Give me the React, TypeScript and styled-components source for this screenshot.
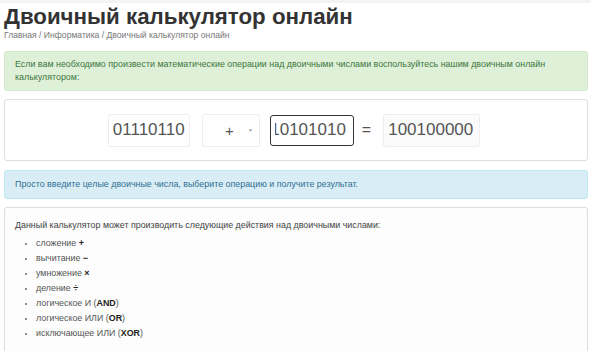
import React from "react";
import styled, { createGlobalStyle } from "styled-components";

const Global = createGlobalStyle`
  html, body { margin: 0; padding: 0; background: #fff; }
  body { font-family: "Liberation Sans", Arial, sans-serif; color: #333; }
`;

const Page = styled.div`
  padding: 0 3px 0 4px;
  border-top: 3px solid #f3f3f3;
`;

const Title = styled.h1`
  margin: 0;
  font-size: 22.3px;
  line-height: 27px;
  font-weight: bold;
  color: #333;
`;

const Crumbs = styled.div`
  font-size: 8.6px;
  line-height: 11px;
  color: #777;
  margin-bottom: 10px;
`;

const Alert = styled.div<{ $tone: "success" | "info" }>`
  border: 1px solid ${(p) => (p.$tone === "success" ? "#d6e9c6" : "#bce8f1")};
  background: ${(p) => (p.$tone === "success" ? "#dff0d8" : "#d9edf7")};
  color: ${(p) => (p.$tone === "success" ? "#3c763d" : "#31708f")};
  border-radius: 3px;
  font-size: 8.9px;
  line-height: 13px;
  padding: ${(p) => (p.$tone === "success" ? "6px 10px" : "7px 10px")};
  margin-bottom: 8px;
`;

const CalcPanel = styled.div`
  border: 1px solid #ddd;
  border-radius: 3px;
  background: #fff;
  height: 60px;
  display: flex;
  align-items: center;
  justify-content: center;
  margin-bottom: 9px;
  padding-right: 4px;
`;

const Field = styled.div<{ $focus?: boolean; $readonly?: boolean; $w: number }>`
  width: ${(p) => p.$w}px;
  height: ${(p) => (p.$focus ? 31 : 33)}px;
  box-sizing: border-box;
  border: ${(p) => (p.$focus ? "1.5px solid #333" : "1px solid #eee")};
  border-radius: ${(p) => (p.$focus ? 3 : 2)}px;
  background: ${(p) => (p.$readonly ? "#fbfbfb" : "#fff")};
  color: #555;
  font-size: 17px;
  display: flex;
  align-items: center;
  padding: 0 4px;
  white-space: nowrap;
`;

const Scroller = styled.span`
  display: block;
  overflow: hidden;
  flex: 1;
`;

const Shifted = styled.span`
  display: inline-block;
  margin-left: -4.6px;
`;

const Select = styled.div`
  width: 58px;
  height: 33px;
  box-sizing: border-box;
  border: 1px solid #eee;
  border-radius: 2px;
  display: flex;
  align-items: center;
  justify-content: flex-end;
  gap: 14px;
  padding-right: 6px;
  color: #555;
  font-size: 15px;
  margin: 0 10px 0 12px;
`;

const Caret = styled.span`
  font-size: 5px;
  color: #999;
`;

const Eq = styled.span`
  font-size: 16px;
  color: #555;
  margin: 0 12px 0 8px;
`;

const InfoPanel = styled.div`
  border: 1px solid #ddd;
  border-radius: 3px;
  background: #fcfdfc;
  padding: 11px 10px 20px;
  font-size: 8.9px;
  line-height: 13px;
  color: #444;
  min-height: 120px;
`;

const Intro = styled.p`
  margin: 0 0 4px;
`;

const List = styled.ul`
  margin: 0;
  padding-left: 21px;
  li {
    line-height: 15px;
    color: #555;
  }
  li::marker { font-size: 8px; color: #666; }
  b { color: #222; }
`;

export default function App() {
  return (
    <>
      <Global />
      <Page>
        <Title>Двоичный калькулятор онлайн</Title>
        <Crumbs>Главная / Информатика / Двоичный калькулятор онлайн</Crumbs>
        <Alert $tone="success">
          Если вам необходимо произвести математические операции над двоичными числами воспользуйтесь нашим двоичным онлайн калькулятором:
        </Alert>
        <CalcPanel>
          <Field $w={82}>01110110</Field>
          <Select>
            <span>+</span>
            <Caret>▼</Caret>
          </Select>
          <Field $w={84} $focus>
            <Scroller>
              <Shifted>10101010</Shifted>
            </Scroller>
          </Field>
          <Eq>=</Eq>
          <Field $w={97} $readonly>100100000</Field>
        </CalcPanel>
        <Alert $tone="info">
          Просто введите целые двоичные числа, выберите операцию и получите результат.
        </Alert>
        <InfoPanel>
          <Intro>Данный калькулятор может производить следующие действия над двоичными числами:</Intro>
          <List>
            <li>сложение <b>+</b></li>
            <li>вычитание <b>−</b></li>
            <li>умножение <b>×</b></li>
            <li>деление <b>÷</b></li>
            <li>логическое И (<b>AND</b>)</li>
            <li>логическое ИЛИ (<b>OR</b>)</li>
            <li>исключающее ИЛИ (<b>XOR</b>)</li>
          </List>
        </InfoPanel>
      </Page>
    </>
  );
}
